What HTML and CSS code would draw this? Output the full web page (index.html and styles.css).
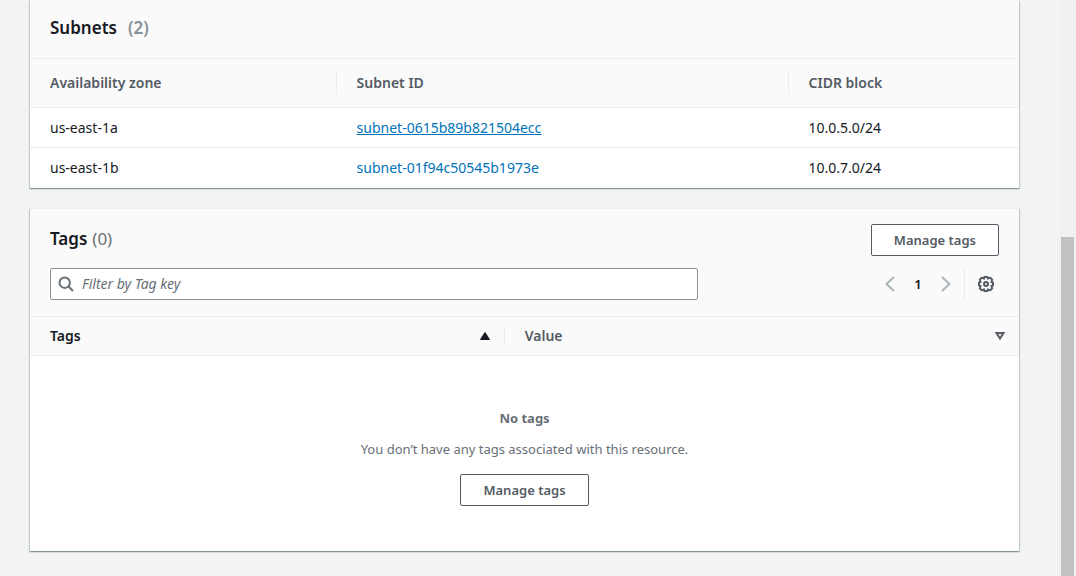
FILE: index.html
```
<!DOCTYPE html>
<html lang="en">
<head>
<meta charset="utf-8">
<title>Subnets and tags</title>
<link rel="stylesheet" href="styles.css">
</head>
<body>
<div class="page">
  <main class="content">
    <section class="panel panel-open">
      <header class="subnets-header">
        <h2 class="title">Subnets</h2>
        <span class="count count-strong">(2)</span>
      </header>
      <table class="table subnets-table">
        <thead>
          <tr>
            <th class="col-zone"><div class="head-cell">Availability zone</div></th>
            <th class="col-id"><div class="head-cell">Subnet ID</div></th>
            <th><div class="head-cell">CIDR block</div></th>
          </tr>
        </thead>
        <tbody>
          <tr><td>us-east-1a</td><td><a class="link link-active" href="#subnet-a">subnet-0615b89b821504ecc</a></td><td>10.0.5.0/24</td></tr>
          <tr><td>us-east-1b</td><td><a class="link" href="#subnet-b">subnet-01f94c50545b1973e</a></td><td>10.0.7.0/24</td></tr>
        </tbody>
      </table>
    </section>

    <section class="panel">
      <header class="tags-header">
        <div class="title-row">
          <div class="heading"><h2 class="title">Tags</h2><span class="count">(0)</span></div>
          <button class="button" type="button">Manage tags</button>
        </div>
        <div class="toolbar">
          <label class="search">
            <svg class="icon" viewBox="0 0 16 16" aria-hidden="true"><circle cx="6.7" cy="6.7" r="5.2"/><path d="M10.5 10.5 15 15"/></svg>
            <input class="search-input" type="text" placeholder="Filter by Tag key" aria-label="Filter by Tag key">
          </label>
          <div class="controls">
            <nav class="pager" aria-label="Pages">
              <button class="icon-button pale" type="button" aria-label="Previous page"><svg class="icon" viewBox="0 0 16 16"><path d="M12 1 4.500 8 12 15"/></svg></button>
              <span class="page-number">1</span>
              <button class="icon-button pale" type="button" aria-label="Next page"><svg class="icon" viewBox="0 0 16 16"><path d="M4 1 11.500 8 4 15"/></svg></button>
            </nav>
            <button class="icon-button settings" type="button" aria-label="Settings"><svg class="icon" viewBox="0 0 16 16"><path d="M6.500 1h3l.5 1.500 2.400-.6 1.700 1.700-.6 2.400 1.500.5v3l-1.500.5.6 2.400-1.700 1.700-2.400-.6-.5 1.500h-3L6 13.500l-2.400.6-1.700-1.700.6-2.400L1 9.500v-3L2.500 6l-.6-2.400 1.700-1.700 2.400.6z"/><circle cx="8" cy="8" r="2"/></svg></button>
          </div>
        </div>
      </header>
      <table class="table tags-table">
        <thead>
          <tr>
            <th class="col-tags sorted"><div class="head-cell">Tags<svg class="sort" viewBox="0 0 10 8" aria-hidden="true"><path d="M5 .5 9.500 7.500H.5z" fill="currentColor"/></svg></div></th>
            <th><div class="head-cell">Value<svg class="sort" viewBox="0 0 10 8" aria-hidden="true"><path d="M1.500 1h7L5 6.500z"/></svg></div></th>
          </tr>
        </thead>
      </table>
      <div class="empty">
        <strong>No tags</strong>
        <p class="empty-text">You don’t have any tags associated with this resource.</p>
        <button class="button" type="button">Manage tags</button>
      </div>
    </section>
  </main>
  <div class="scroll-track" aria-hidden="true"><div class="scroll-thumb"></div></div>
</div>
</body>
</html>
```
FILE: styles.css
```
* { box-sizing: border-box; }
body {
  margin: 0;
  background: #f2f3f3;
  color: #16191f;
  font: 13px/20px "Noto Sans", "Open Sans", sans-serif;
}
.page { display: flex; min-height: 100vh; }
.content {
  flex: 1;
  display: flex;
  flex-direction: column;
  gap: 20px;
  padding: 0 40px 24px 30px;
}
.panel {
  background: #fff;
  border-top: 1px solid #eaeded;
  box-shadow: 0 1px 0 0 #879596, 0 1px 1px 0 rgba(0, 28, 36, .3), 1px 1px 1px 0 rgba(0, 28, 36, .15), -1px 1px 1px 0 rgba(0, 28, 36, .15);
}
.panel-open { border-top: 0; }
.title { margin: 0; font-size: 17px; line-height: 24px; font-weight: 600; }
.count { color: #687078; font-size: 17px; line-height: 24px; }
.count-strong { color: #879096; font-weight: 600; }
.subnets-header {
  display: flex;
  gap: 11px;
  padding: 16px 20px 18px;
  background: #fafafa;
}
.table { width: 100%; border-collapse: separate; border-spacing: 0; table-layout: fixed; font-size: 14px; }
.table th {
  padding: 0;
  background: #fafafa;
  border-top: 1px solid #eaeded;
  border-bottom: 1px solid #eaeded;
  color: #545b64;
  font-weight: 600;
  text-align: left;
}
.head-cell { display: flex; align-items: center; justify-content: space-between; border-right: 1px solid #eaeded; }
th:last-child .head-cell { border-right: 0; }
.subnets-table .head-cell { height: 24px; margin: 12px 0; padding-left: 20px; }
.subnets-table th { font-size: 14px; }
.col-zone { width: 31%; }
.col-id { width: 45.7%; }
.table td { padding: 10px 20px 9px; border-bottom: 1px solid #eaeded; }
.subnets-table tr:last-child td { border-bottom-color: #fff; }
.link { color: #0073bb; text-decoration: none; }
.link-active { text-decoration: underline; }
.tags-header { padding: 15px 20px 16px; background: #fafafa; }
.title-row, .toolbar, .controls, .pager { display: flex; align-items: center; }
.title-row, .toolbar { justify-content: space-between; }
.heading { display: flex; gap: 5px; padding-bottom: 2px; }
.button {
  height: 32px;
  padding: 0 22px;
  border: 1px solid #545b64;
  border-radius: 2px;
  background: #fff;
  color: #545b64;
  font: inherit;
  font-weight: 600;
}
.toolbar { margin-top: 12px; }
.search {
  display: flex;
  align-items: center;
  gap: 8px;
  width: 68.3%;
  height: 32px;
  padding: 0 8px 0 7px;
  border: 1px solid #879596;
  border-radius: 2px;
  background: #fff;
  color: #687078;
}
.search-input { flex: 1; padding: 0; border: 0; outline: 0; background: none; font: inherit; font-size: 14px; }
.search-input::placeholder { color: #687078; font-style: italic; opacity: 1; }
.icon { display: block; width: 16px; height: 16px; fill: none; stroke: currentColor; stroke-width: 2; }
.icon-button { padding: 0; border: 0; background: none; color: #545b64; }
.pale { color: #aab7b8; }
.pager { gap: 16px; padding-right: 10px; }
.page-number { width: 8px; font-weight: 600; text-align: center; }
.settings { height: 32px; padding: 0 5px 0 13px; border-left: 1px solid #eaeded; }
.tags-table .head-cell { height: 20px; margin: 9px 0; padding: 0 14px 0 20px; }
.table .sorted { color: #16191f; }
.col-tags { width: 48%; }
.sort { width: 10px; height: 8px; fill: none; stroke: currentColor; stroke-width: 2; }
.sorted .sort { stroke-width: 1; }
.empty {
  display: flex;
  flex-direction: column;
  align-items: center;
  padding: 52px 20px 45px;
  color: #687078;
}
.empty-text { margin: 11px 0 15px; }
.scroll-track { display: flex; flex-direction: column; width: 17px; padding: 0 2px; background: #f1f1f1; }
.scroll-track::before { content: ""; flex: 7; }
.scroll-thumb { flex: 10; background: #c1c1c1; }
```
